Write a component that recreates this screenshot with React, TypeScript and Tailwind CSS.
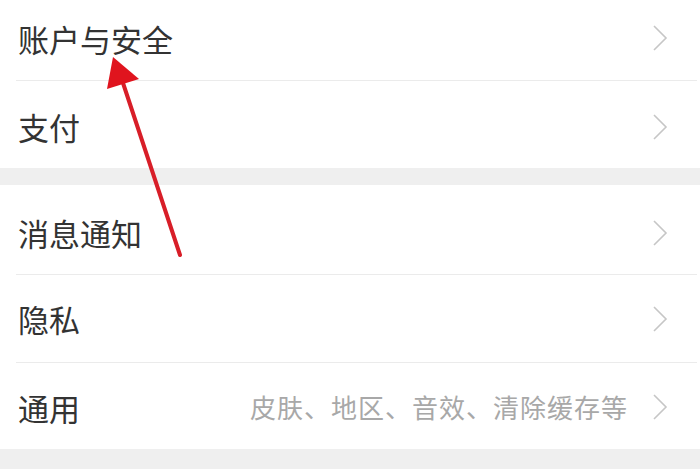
import React from "react";

const FONT = { fontFamily: '"Noto Sans CJK SC", "Noto Sans", sans-serif' };

function Chevron() {
  return (
    <svg width="16" height="28" viewBox="0 0 16 28" className="shrink-0">
      <polyline points="2,2 14,14 2,26" fill="none" stroke="#c6c6c6" strokeWidth="1.6" />
    </svg>
  );
}

function Row({ label, hint, h }: { label: string; hint?: string; h: string }) {
  return (
    <div className={`flex items-center justify-between pl-[18px] pr-[32px] ${h}`}>
      <span className="text-[31px] text-[#333333] leading-none">{label}</span>
      <div className="flex items-center gap-[24px]">
        {hint && <span className="text-[26px] tracking-[1px] text-[#a8a8a8] leading-none">{hint}</span>}
        <Chevron />
      </div>
    </div>
  );
}

function Divider() {
  return <div className="ml-[16px] mr-[3px] h-px bg-[#ebebeb]" />;
}

export default function App() {
  return (
    <div className="relative w-[700px] h-[470px] overflow-hidden bg-white" style={FONT}>
      <Row label="账户与安全" h="h-[80px] pb-[4px]" />
      <Divider />
      <Row label="支付" h="h-[87px] pt-[4px]" />
      <div className="h-[17px] bg-[#efefef]" />
      <Row label="消息通知" h="h-[89px] pt-[6px]" />
      <Divider />
      <Row label="隐私" h="h-[87px]" />
      <Divider />
      <Row label="通用" hint="皮肤、地区、音效、清除缓存等" h="h-[86px] pt-[2px]" />
      <div className="h-[20px] bg-[#efefef]" />

      <svg className="absolute left-0 top-0 pointer-events-none" width="700" height="470">
        <line x1="180" y1="255" x2="122" y2="80" stroke="#d81e28" strokeWidth="4" strokeLinecap="round" />
        <polygon points="113,57 107,89 139,79" fill="#e0141e" />
      </svg>
    </div>
  );
}
